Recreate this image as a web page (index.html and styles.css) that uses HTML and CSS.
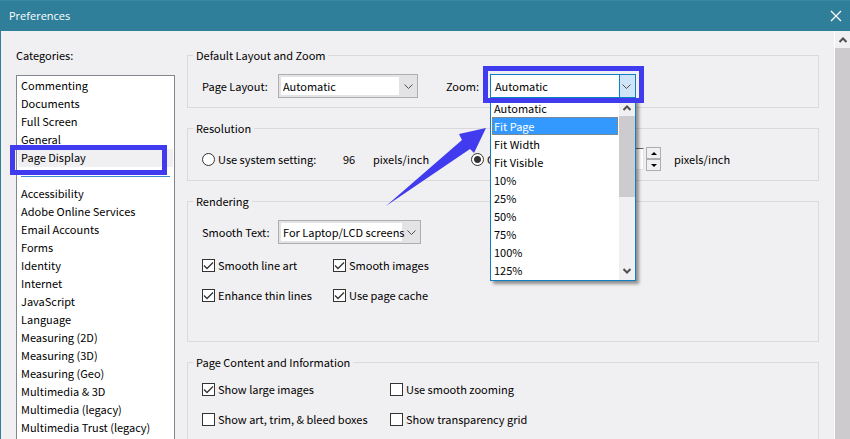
FILE: index.html
```html
<!DOCTYPE html>
<html lang="en">
<head>
  <meta charset="UTF-8" />
  <title>Preferences</title>
  <link rel="stylesheet" href="styles.css">
</head>
<body>

  <div class="titlebar">
    <h1>Preferences</h1>
    <button class="close" aria-label="Close">
      <svg width="12" height="12" viewBox="0 0 12 12"><path d="M1 1L11 11M11 1L1 11" /></svg>
    </button>
  </div>

  <div class="window">

    <div class="sidebar">
      <label for="categories">Categories:</label>
      <div class="list-wrap">
        <select id="categories" class="categories" size="20">
          <option>Commenting</option>
          <option>Documents</option>
          <option>Full Screen</option>
          <option>General</option>
          <option selected>Page Display</option>
          <option class="divider" disabled></option>
          <option>Accessibility</option>
          <option>Adobe Online Services</option>
          <option>Email Accounts</option>
          <option>Forms</option>
          <option>Identity</option>
          <option>Internet</option>
          <option>JavaScript</option>
          <option>Language</option>
          <option>Measuring (2D)</option>
          <option>Measuring (3D)</option>
          <option>Measuring (Geo)</option>
          <option>Multimedia &amp; 3D</option>
          <option>Multimedia (legacy)</option>
          <option>Multimedia Trust (legacy)</option>
        </select>
        <div class="mark mark-category"></div>
      </div>
    </div>

    <div class="panel">
      <fieldset>
        <legend>Default Layout and Zoom</legend>
        <div class="row">
          <label class="name" for="layout">Page Layout:</label>
          <div class="combo combo-layout">
            <select id="layout"><option>Automatic</option></select>
            <svg class="chevron" width="9" height="6" viewBox="0 0 9 6"><path d="M0.5 0.5L4.5 4.5L8.5 0.5" /></svg>
          </div>
          <label class="zoom-label" for="zoom">Zoom:</label>
          <div class="combo combo-zoom">
            <select id="zoom"><option>Automatic</option></select>
            <svg class="chevron" width="9" height="6" viewBox="0 0 9 6"><path d="M0.5 0.5L4.5 4.5L8.5 0.5" /></svg>
            <div class="popup">
              <ul role="listbox" aria-label="Zoom">
                <li role="option">Automatic</li>
                <li role="option" class="active" aria-selected="true">Fit Page</li>
                <li role="option">Fit Width</li>
                <li role="option">Fit Visible</li>
                <li role="option">10%</li>
                <li role="option">25%</li>
                <li role="option">50%</li>
                <li role="option">75%</li>
                <li role="option">100%</li>
                <li role="option">125%</li>
              </ul>
              <div class="popup-scroll">
                <svg width="8" height="6" viewBox="0 0 8 6"><path d="M0.5 5L4 1.5L7.5 5" /></svg>
                <div class="thumb"></div>
                <svg width="8" height="6" viewBox="0 0 8 6"><path d="M0.5 1L4 4.5L7.5 1" /></svg>
              </div>
            </div>
            <div class="mark mark-zoom"></div>
            <svg class="arrow" width="102" height="80" viewBox="0 0 102 80"><path d="M0 78L76 12L73 6L100 0L88 25L84 21Z" /></svg>
          </div>
        </div>
      </fieldset>

      <fieldset>
        <legend>Resolution</legend>
        <div class="row">
          <label class="check system"><input type="radio" name="resolution">Use system setting:</label>
          <span class="dpi">96</span>
          <span class="unit">pixels/inch</span>
          <label class="check custom"><input type="radio" name="resolution" checked>C</label>
          <input class="number" type="text" aria-label="Resolution">
          <div class="spinner">
            <button aria-label="Increase"><svg width="6" height="3" viewBox="0 0 6 3"><path d="M0 3L3 0L6 3Z" /></svg></button>
            <button aria-label="Decrease"><svg width="6" height="3" viewBox="0 0 6 3"><path d="M0 0L3 3L6 0Z" /></svg></button>
          </div>
          <span>pixels/inch</span>
        </div>
      </fieldset>

      <fieldset class="rendering">
        <legend>Rendering</legend>
        <div class="row">
          <label class="name" for="smooth">Smooth Text:</label>
          <div class="combo combo-smooth">
            <select id="smooth"><option>For Laptop/LCD screens</option></select>
            <svg class="chevron" width="9" height="6" viewBox="0 0 9 6"><path d="M0.5 0.5L4.5 4.5L8.5 0.5" /></svg>
          </div>
        </div>
        <div class="checks">
          <label class="check"><input type="checkbox" checked>Smooth line art</label>
          <label class="check"><input type="checkbox" checked>Smooth images</label>
          <label class="check"><input type="checkbox" checked>Enhance thin lines</label>
          <label class="check"><input type="checkbox" checked>Use page cache</label>
        </div>
      </fieldset>

      <fieldset class="content">
        <legend>Page Content and Information</legend>
        <div class="checks wide">
          <label class="check"><input type="checkbox" checked>Show large images</label>
          <label class="check"><input type="checkbox">Use smooth zooming</label>
          <label class="check"><input type="checkbox">Show art, trim, &amp; bleed boxes</label>
          <label class="check"><input type="checkbox">Show transparency grid</label>
        </div>
      </fieldset>
    </div>

    <div class="scrollbar">
      <svg width="8" height="6" viewBox="0 0 8 6"><path d="M0.5 5L4 1.5L7.5 5" /></svg>
      <div class="thumb"></div>
    </div>

  </div>

</body>
</html>
```

FILE: styles.css
```css
* {
  box-sizing: border-box;
}

body {
  margin: 0;
  height: 100vh;
  display: flex;
  flex-direction: column;
  overflow: hidden;
  background: #f0eff1;
  color: #000;
  font-family: "Noto Sans CJK SC", "Open Sans", sans-serif;
  font-size: 11px;
  line-height: 18px;
}

select, input, button {
  font: inherit;
  color: inherit;
  margin: 0;
}

svg path {
  fill: none;
  stroke: #505050;
}

/* title bar */
.titlebar {
  flex: none;
  height: 31px;
  padding: 0 8px 0 9px;
  display: flex;
  align-items: center;
  justify-content: space-between;
  background: #2f7f9b;
  border-top: 1px solid #3a87a5;
  color: #fff;
}

.titlebar h1 {
  margin: 0;
  font-family: "Open Sans", sans-serif;
  font-size: 11px;
  font-weight: normal;
}

.close {
  display: flex;
  padding: 0;
  border: none;
  background: none;
}

.close path {
  stroke: #fff;
  stroke-width: 1.3;
}

.window {
  flex: 1;
  min-height: 0;
  display: flex;
  border-left: 1px solid #2f7f9b;
}

/* category list */
.sidebar {
  flex: none;
  width: 159px;
  margin: 15px 12px 0 15px;
  display: flex;
  flex-direction: column;
}

.list-wrap {
  flex: 1;
  min-height: 0;
  position: relative;
  margin-top: 11px;
}

.categories {
  display: block;
  width: 100%;
  height: 100%;
  padding: 1px;
  border: 1px solid #82878f;
  border-bottom: none;
  border-radius: 0;
  outline: none;
  overflow: hidden;
  background: #fff;
}

.categories option {
  height: 18px;
  min-height: 18px;
  padding: 0 3px;
  line-height: 18px;
}

.categories option:checked {
  background: #f0eff1 linear-gradient(#f0eff1, #f0eff1);
  color: #000;
}

.categories .divider {
  margin: 0 3px;
  background: linear-gradient(#3a8ad0, #3a8ad0) 0 9px / 100% 1px no-repeat;
}

/* highlight frames */
.mark {
  position: absolute;
  border: 5px solid #403bee;
  pointer-events: none;
}

.mark-category {
  left: -6px;
  top: 70px;
  width: 157px;
  height: 30px;
}

.mark-zoom {
  left: -7px;
  right: -8px;
  top: -8px;
  height: 37px;
  z-index: 3;
}

.arrow {
  position: absolute;
  left: -104px;
  top: 54px;
  z-index: 3;
}

.arrow path {
  fill: #403bee;
  stroke: none;
}

/* settings */
.panel {
  flex: 1;
  min-width: 0;
  padding: 15px 15px 0 0;
  display: flex;
  flex-direction: column;
  gap: 11px;
}

fieldset {
  flex: none;
  min-width: 0;
  margin: 0;
  padding: 10px 14px 9px;
  border: 1px solid #dad9dc;
}

legend {
  margin-left: -9px;
  padding: 0 3px;
}

.rendering {
  padding-bottom: 34px;
}

.content {
  flex: 1;
  padding-top: 6px;
  padding-bottom: 0;
  border-bottom: none;
}

.row {
  display: flex;
  align-items: center;
  height: 24px;
  white-space: nowrap;
}

.name {
  width: 76px;
}

.combo {
  position: relative;
}

.combo select {
  appearance: none;
  display: block;
  width: 100%;
  height: 24px;
  padding: 0 14px 0 4px;
  border: 1px solid #adadad;
  border-radius: 0;
  outline: none;
  background: linear-gradient(#fff, #fff) 2px 2px / calc(100% - 20px) 18px no-repeat #e3e2e4;
}

.chevron {
  position: absolute;
  right: 5px;
  top: 10px;
}

.combo-layout {
  width: 140px;
}

.combo-smooth {
  width: 143px;
}

.zoom-label {
  width: 44px;
  margin-left: 28px;
}

.combo-zoom {
  width: 146px;
}

.combo-zoom select {
  border-color: #0f7fc4;
  background: linear-gradient(to left, #cfe5f7 15px, #0f7fc4 15px, #0f7fc4 16px, #fff 16px);
}

.popup {
  position: absolute;
  top: 24px;
  left: 0;
  right: 0;
  z-index: 2;
  display: flex;
  background: #fff;
  border: 1px solid #0f7fc4;
  box-shadow: 3px 3px 3px rgba(0,0,0,0.4);
}

.popup ul {
  flex: 1;
  margin: 0;
  padding: 0 1px 1px;
  list-style: none;
}

.popup li {
  padding: 0 2px;
}

.popup .active {
  background: #3399ff;
  color: #fff;
  outline: 1px dotted #b97a3c;
  outline-offset: -1px;
}

.popup-scroll {
  width: 16px;
  display: flex;
  flex-direction: column;
  align-items: center;
  padding: 6px 0;
  background: #f0eff1;
}

.popup-scroll path, .scrollbar path {
  stroke-width: 2;
}

.popup-scroll .thumb {
  width: 100%;
  height: 81px;
  margin: 5px 0 auto;
  background: #cdcbcd;
}

.check {
  display: flex;
  align-items: center;
  gap: 3px;
  white-space: nowrap;
}

.check input {
  appearance: none;
  flex: none;
  width: 13px;
  height: 13px;
  border: 1px solid #333;
  background: #fff;
}

.check input[type="radio"] {
  border-radius: 50%;
}

.check input[type="radio"]:checked {
  background: radial-gradient(circle, #333 3px, #fff 4px);
}

.check input[type="checkbox"]:checked {
  background: #fff url("data:image/svg+xml,%3Csvg xmlns='http://www.w3.org/2000/svg' viewBox='0 0 11 11'%3E%3Cpath d='M1 5.5L4 8.5L10 2.5' fill='none' stroke='%23333' stroke-width='1.3'/%3E%3C/svg%3E") center / 11px 11px no-repeat;
}

.checks {
  display: grid;
  grid-template-columns: 131px auto;
  grid-auto-rows: 24px;
  justify-content: start;
  row-gap: 6px;
}

.row + .checks {
  margin-top: 9px;
}

.checks.wide {
  grid-template-columns: 188px auto;
}

/* resolution row */
.system {
  width: 141px;
}

.dpi {
  width: 30px;
}

.unit {
  width: 98px;
}

.custom {
  width: 123px;
}

.number {
  width: 50px;
  height: 22px;
  border: 1px solid #e3e3e3;
  border-top-color: #696969;
  background: #fff;
}

.spinner {
  display: flex;
  flex-direction: column;
  width: 15px;
  height: 24px;
  margin: 0 13px 0 2px;
}

.spinner button {
  flex: 1;
  display: flex;
  align-items: center;
  justify-content: center;
  padding: 0;
  border: 1px solid #adadad;
  background: #f0eff1;
}

.spinner path {
  fill: #000;
  stroke: none;
}

/* window scrollbar */
.scrollbar {
  flex: none;
  width: 16px;
  padding-top: 6px;
  display: flex;
  flex-direction: column;
  align-items: center;
  border-left: 1px solid #fff;
}

.scrollbar .thumb {
  flex: 1;
  width: 100%;
  margin-top: 5px;
  background: #cdcbcd;
}
```
